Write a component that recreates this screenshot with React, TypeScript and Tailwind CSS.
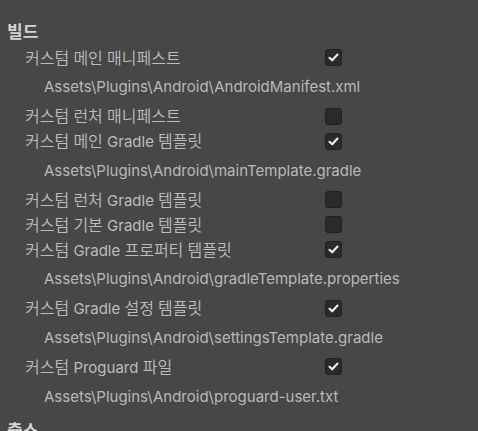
import React from "react";

type Row =
  | { kind: "label"; text: string; checked: boolean }
  | { kind: "path"; text: string };

const rows: Row[] = [
  { kind: "label", text: "커스텀 메인 매니페스트", checked: true },
  { kind: "path", text: "Assets\\Plugins\\Android\\AndroidManifest.xml" },
  { kind: "label", text: "커스텀 런처 매니페스트", checked: false },
  { kind: "label", text: "커스텀 메인 Gradle 템플릿", checked: true },
  { kind: "path", text: "Assets\\Plugins\\Android\\mainTemplate.gradle" },
  { kind: "label", text: "커스텀 런처 Gradle 템플릿", checked: false },
  { kind: "label", text: "커스텀 기본 Gradle 템플릿", checked: false },
  { kind: "label", text: "커스텀 Gradle 프로퍼티 템플릿", checked: true },
  { kind: "path", text: "Assets\\Plugins\\Android\\gradleTemplate.properties" },
  { kind: "label", text: "커스텀 Gradle 설정 템플릿", checked: true },
  { kind: "path", text: "Assets\\Plugins\\Android\\settingsTemplate.gradle" },
  { kind: "label", text: "커스텀 Proguard 파일", checked: true },
  { kind: "path", text: "Assets\\Plugins\\Android\\proguard-user.txt" },
];

// Hangul runs are drawn slightly larger than Latin runs, as in the reference
function Mixed({ text }: { text: string }) {
  const parts = text.split(/([\uAC00-\uD7A3]+)/);
  return (
    <>
      {parts.map((p, i) =>
        /[\uAC00-\uD7A3]/.test(p) ? (
          <span key={i} className="text-[16px] font-[350]">
            {p}
          </span>
        ) : (
          <span key={i}>{p}</span>
        )
      )}
    </>
  );
}

function Checkbox({ checked }: { checked: boolean }) {
  return (
    <div className="w-[17px] h-[17px] rounded-[3px] bg-[#2a2a2a] border border-[#212121] flex items-center justify-center">
      {checked && (
        <svg width="11" height="9" viewBox="0 0 11 9" fill="none">
          <path
            d="M1.5 4.8 L4.2 7.3 L9.5 1.5"
            stroke="#eeeeee"
            strokeWidth="2.1"
            strokeLinecap="round"
            strokeLinejoin="round"
          />
        </svg>
      )}
    </div>
  );
}

export default function App() {
  return (
    <div
      className="w-[478px] h-[431px] overflow-hidden bg-[#474747] pt-[20px] text-[15px] leading-none"
      style={{ fontFamily: "Inter, 'Noto Sans CJK KR', sans-serif" }}
    >
      <div className="h-[25px] flex items-center pl-[7px] font-bold text-[17px] text-[#d4d4d4]">
        빌드
      </div>
      {rows.map((r, i) =>
        r.kind === "label" ? (
          <div key={i} className="h-[25px] flex items-center">
            <div className="w-[301px] pl-[25px] text-[#bdbdbd] whitespace-nowrap">
              <Mixed text={r.text} />
            </div>
            <div className="pl-[24px]">
              <Checkbox checked={r.checked} />
            </div>
          </div>
        ) : (
          <div
            key={i}
            className="h-[33.6px] flex items-center pl-[44px] text-[#b9b9b9] whitespace-nowrap"
          >
            {r.text}
          </div>
        )
      )}
      <div className="mt-[6px] h-[25px] flex items-center pl-[7px] font-bold text-[17px] text-[#d4d4d4]">
        출소
      </div>
    </div>
  );
}
